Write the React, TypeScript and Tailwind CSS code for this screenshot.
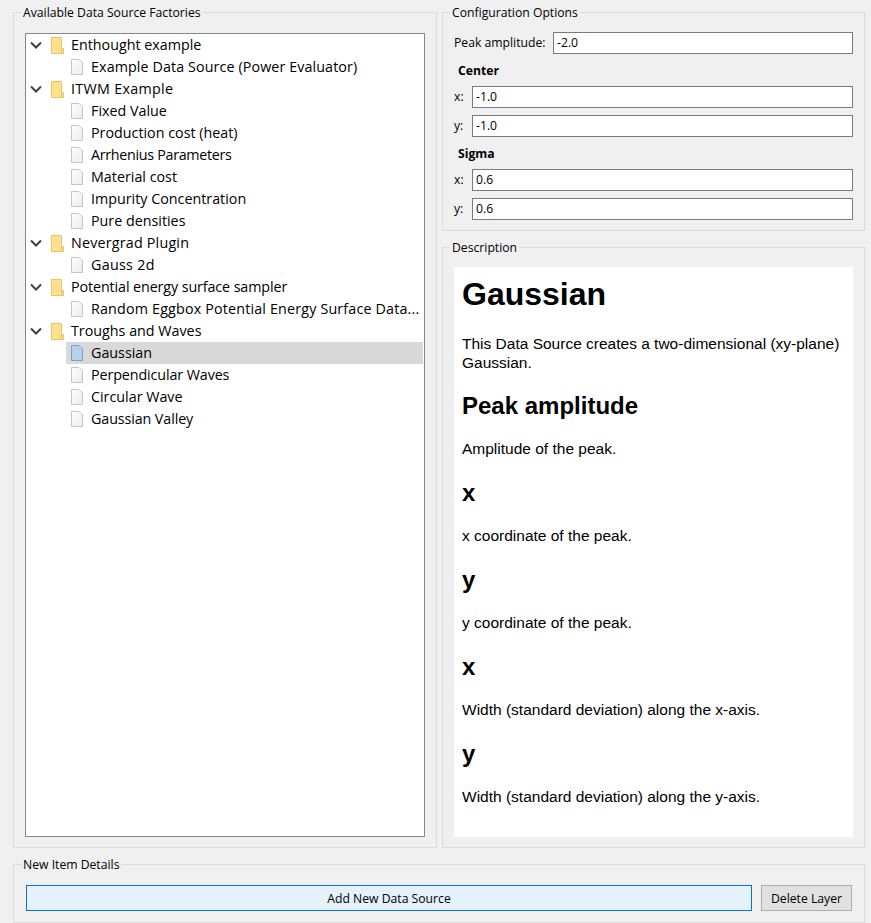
import React from "react";

const FONT = "[font-family:'Open_Sans','Noto_Sans',sans-serif]";

function Chevron() {
  return (
    <svg width="12" height="8" viewBox="0 0 12 8" className="shrink-0" fill="none">
      <path d="M1 1.5 L6 6.5 L11 1.5" stroke="#404040" strokeWidth="2" />
    </svg>
  );
}

function Folder() {
  return (
    <svg width="13" height="17" viewBox="0 0 13 17" className="shrink-0">
      <path d="M0.5 0.5 H10.5 V11.5 H12.5 V16.5 H0.5 Z" fill="#ffe08e" stroke="#e8c468" />
      <path d="M10.5 11.5 V16" fill="none" stroke="#e8c468" />
    </svg>
  );
}

function Doc({ selected }: { selected?: boolean }) {
  const stroke = selected ? "#7f9fbf" : "#c4c4c4";
  const id = selected ? "doc-selected" : "doc-plain";
  return (
    <svg width="12" height="16" viewBox="0 0 12 16" className="shrink-0">
      <defs>
        <linearGradient id={id} x1="0" y1="0" x2="1" y2="1">
          <stop offset="0" stopColor={selected ? "#b3d2ef" : "#ffffff"} />
          <stop offset="1" stopColor={selected ? "#b3d2ef" : "#ececec"} />
        </linearGradient>
      </defs>
      <path d="M0.5 0.5 H8 L11.5 4 V15.5 H0.5 Z" fill={`url(#${id})`} stroke={stroke} />
    </svg>
  );
}

function Parent({ label, className }: { label: string; className?: string }) {
  return (
    <div className="flex h-[22px] items-center text-[14.3px] text-black">
      <span className="ml-[4px] flex w-[21px]"><Chevron /></span>
      <Folder />
      <span className={`ml-[7px] whitespace-nowrap ${className ?? ""}`}>{label}</span>
    </div>
  );
}

function Child({ label, selected, className }: { label: string; selected?: boolean; className?: string }) {
  return (
    <div className={`ml-[40px] mr-[1px] flex h-[22px] items-center pl-[5px] text-[14.3px] text-black ${selected ? "bg-[#d9d9d9]" : ""}`}>
      <Doc selected={selected} />
      <span className={`ml-[8px] whitespace-nowrap ${className ?? ""}`}>{label}</span>
    </div>
  );
}

function Group({ title, className, children }: { title: string; className?: string; children: React.ReactNode }) {
  return (
    <div className={`relative border border-[#dcdcdc] ${className ?? ""}`}>
      <span className={`absolute left-[7px] top-[-8px] bg-[#f0f0f0] px-[2px] text-[12.2px] leading-[16px] text-black ${FONT}`}>
        {title}
      </span>
      {children}
    </div>
  );
}

function Field({ label, value }: { label: string; value: string }) {
  return (
    <div className="flex h-[22px] items-center">
      <span className="w-[18px] shrink-0 text-[12.2px] text-black">{label}</span>
      <div className="flex h-[22px] flex-1 items-center border border-[#7a7a7a] bg-white pl-[3px] text-[12.2px] text-black">{value}</div>
    </div>
  );
}

function Heading({ children }: { children: React.ReactNode }) {
  return <h2 className="mt-[21px] text-[24px] font-bold leading-[28px] text-black">{children}</h2>;
}

function Para({ children }: { children: React.ReactNode }) {
  return <p className="mt-[19px] text-[15.5px] leading-[19px] text-black">{children}</p>;
}

export default function App() {
  return (
    <div className={`flex h-[923px] w-[871px] flex-col overflow-hidden bg-[#f0f0f0] pl-[13px] pr-[6px] pt-[12px] ${FONT}`}>
      <div className="flex h-[836px] shrink-0 gap-[5px]">
        <Group title="Available Data Source Factories" className="h-full w-[424px] shrink-0 px-[11px] pb-[10px] pt-[20px]">
          <div className="h-full w-full overflow-hidden border border-[#828790] bg-white">
            <Parent label="Enthought example" />
            <Child label="Example Data Source (Power Evaluator)" className="tracking-[0.1px]" />
            <Parent label="ITWM Example" className="tracking-[0.3px]" />
            <Child label="Fixed Value" />
            <Child label="Production cost (heat)" />
            <Child label="Arrhenius Parameters" className="tracking-[-0.3px]" />
            <Child label="Material cost" />
            <Child label="Impurity Concentration" />
            <Child label="Pure densities" />
            <Parent label="Nevergrad Plugin" className="tracking-[0.2px]" />
            <Child label="Gauss 2d" className="tracking-[0.3px]" />
            <Parent label="Potential energy surface sampler" className="tracking-[-0.1px]" />
            <Child label="Random Eggbox Potential Energy Surface Data..." className="tracking-[0.17px]" />
            <Parent label="Troughs and Waves" />
            <Child label="Gaussian" selected />
            <Child label="Perpendicular Waves" className="tracking-[-0.1px]" />
            <Child label="Circular Wave" />
            <Child label="Gaussian Valley" className="tracking-[-0.1px]" />
          </div>
        </Group>
        <div className="flex min-w-0 flex-1 flex-col gap-[16px]">
          <Group title="Configuration Options" className="h-[219px] shrink-0 pl-[11px] pr-[11px] pt-[19px]">
            <div className="flex h-[22px] items-center">
              <span className="w-[99px] shrink-0 text-[12.2px] text-black">Peak amplitude:</span>
              <div className="flex h-[22px] flex-1 items-center border border-[#7a7a7a] bg-white pl-[3px] text-[12.2px] text-black">-2.0</div>
            </div>
            <div className="mt-[9px] pl-[4px] text-[12.2px] font-bold leading-[16px] text-black">Center</div>
            <div className="mt-[7px]"><Field label="x:" value="-1.0" /></div>
            <div className="mt-[7px]"><Field label="y:" value="-1.0" /></div>
            <div className="mt-[9px] pl-[4px] text-[12.2px] font-bold leading-[16px] text-black">Sigma</div>
            <div className="mt-[7px]"><Field label="x:" value="0.6" /></div>
            <div className="mt-[7px]"><Field label="y:" value="0.6" /></div>
          </Group>
          <Group title="Description" className="min-h-0 flex-1 px-[11px] pb-[10px] pt-[19px]">
            <div className="h-full overflow-hidden bg-white px-[8px] pt-[9px] font-['Liberation_Sans',sans-serif]">
              <h1 className="text-[32px] font-bold leading-[37px] text-black">Gaussian</h1>
              <p className="mb-[-1px] mt-[21px] text-[15.5px] leading-[19px] text-black">
                This Data Source creates a two-dimensional (xy-plane) Gaussian.
              </p>
              <Heading>Peak amplitude</Heading>
              <Para>Amplitude of the peak.</Para>
              <Heading>x</Heading>
              <Para>x coordinate of the peak.</Para>
              <Heading>y</Heading>
              <Para>y coordinate of the peak.</Para>
              <Heading>x</Heading>
              <Para>Width (standard deviation) along the x-axis.</Para>
              <Heading>y</Heading>
              <Para>Width (standard deviation) along the y-axis.</Para>
            </div>
          </Group>
        </div>
      </div>
      <Group title="New Item Details" className="mt-[16px] h-[59px] shrink-0 pl-[12px] pr-[12px] pt-[20px]">
        <div className="flex gap-[9px]">
          <button className="flex h-[26px] flex-1 items-center justify-center border border-[#0078d7] bg-[#e5f1fb] pt-[2px] text-[12.2px] text-black">Add New Data Source</button>
          <button className="flex h-[26px] w-[91px] items-center justify-center border border-[#adadad] bg-[#e1e1e1] pt-[2px] text-[12.2px] text-black">Delete Layer</button>
        </div>
      </Group>
    </div>
  );
}
